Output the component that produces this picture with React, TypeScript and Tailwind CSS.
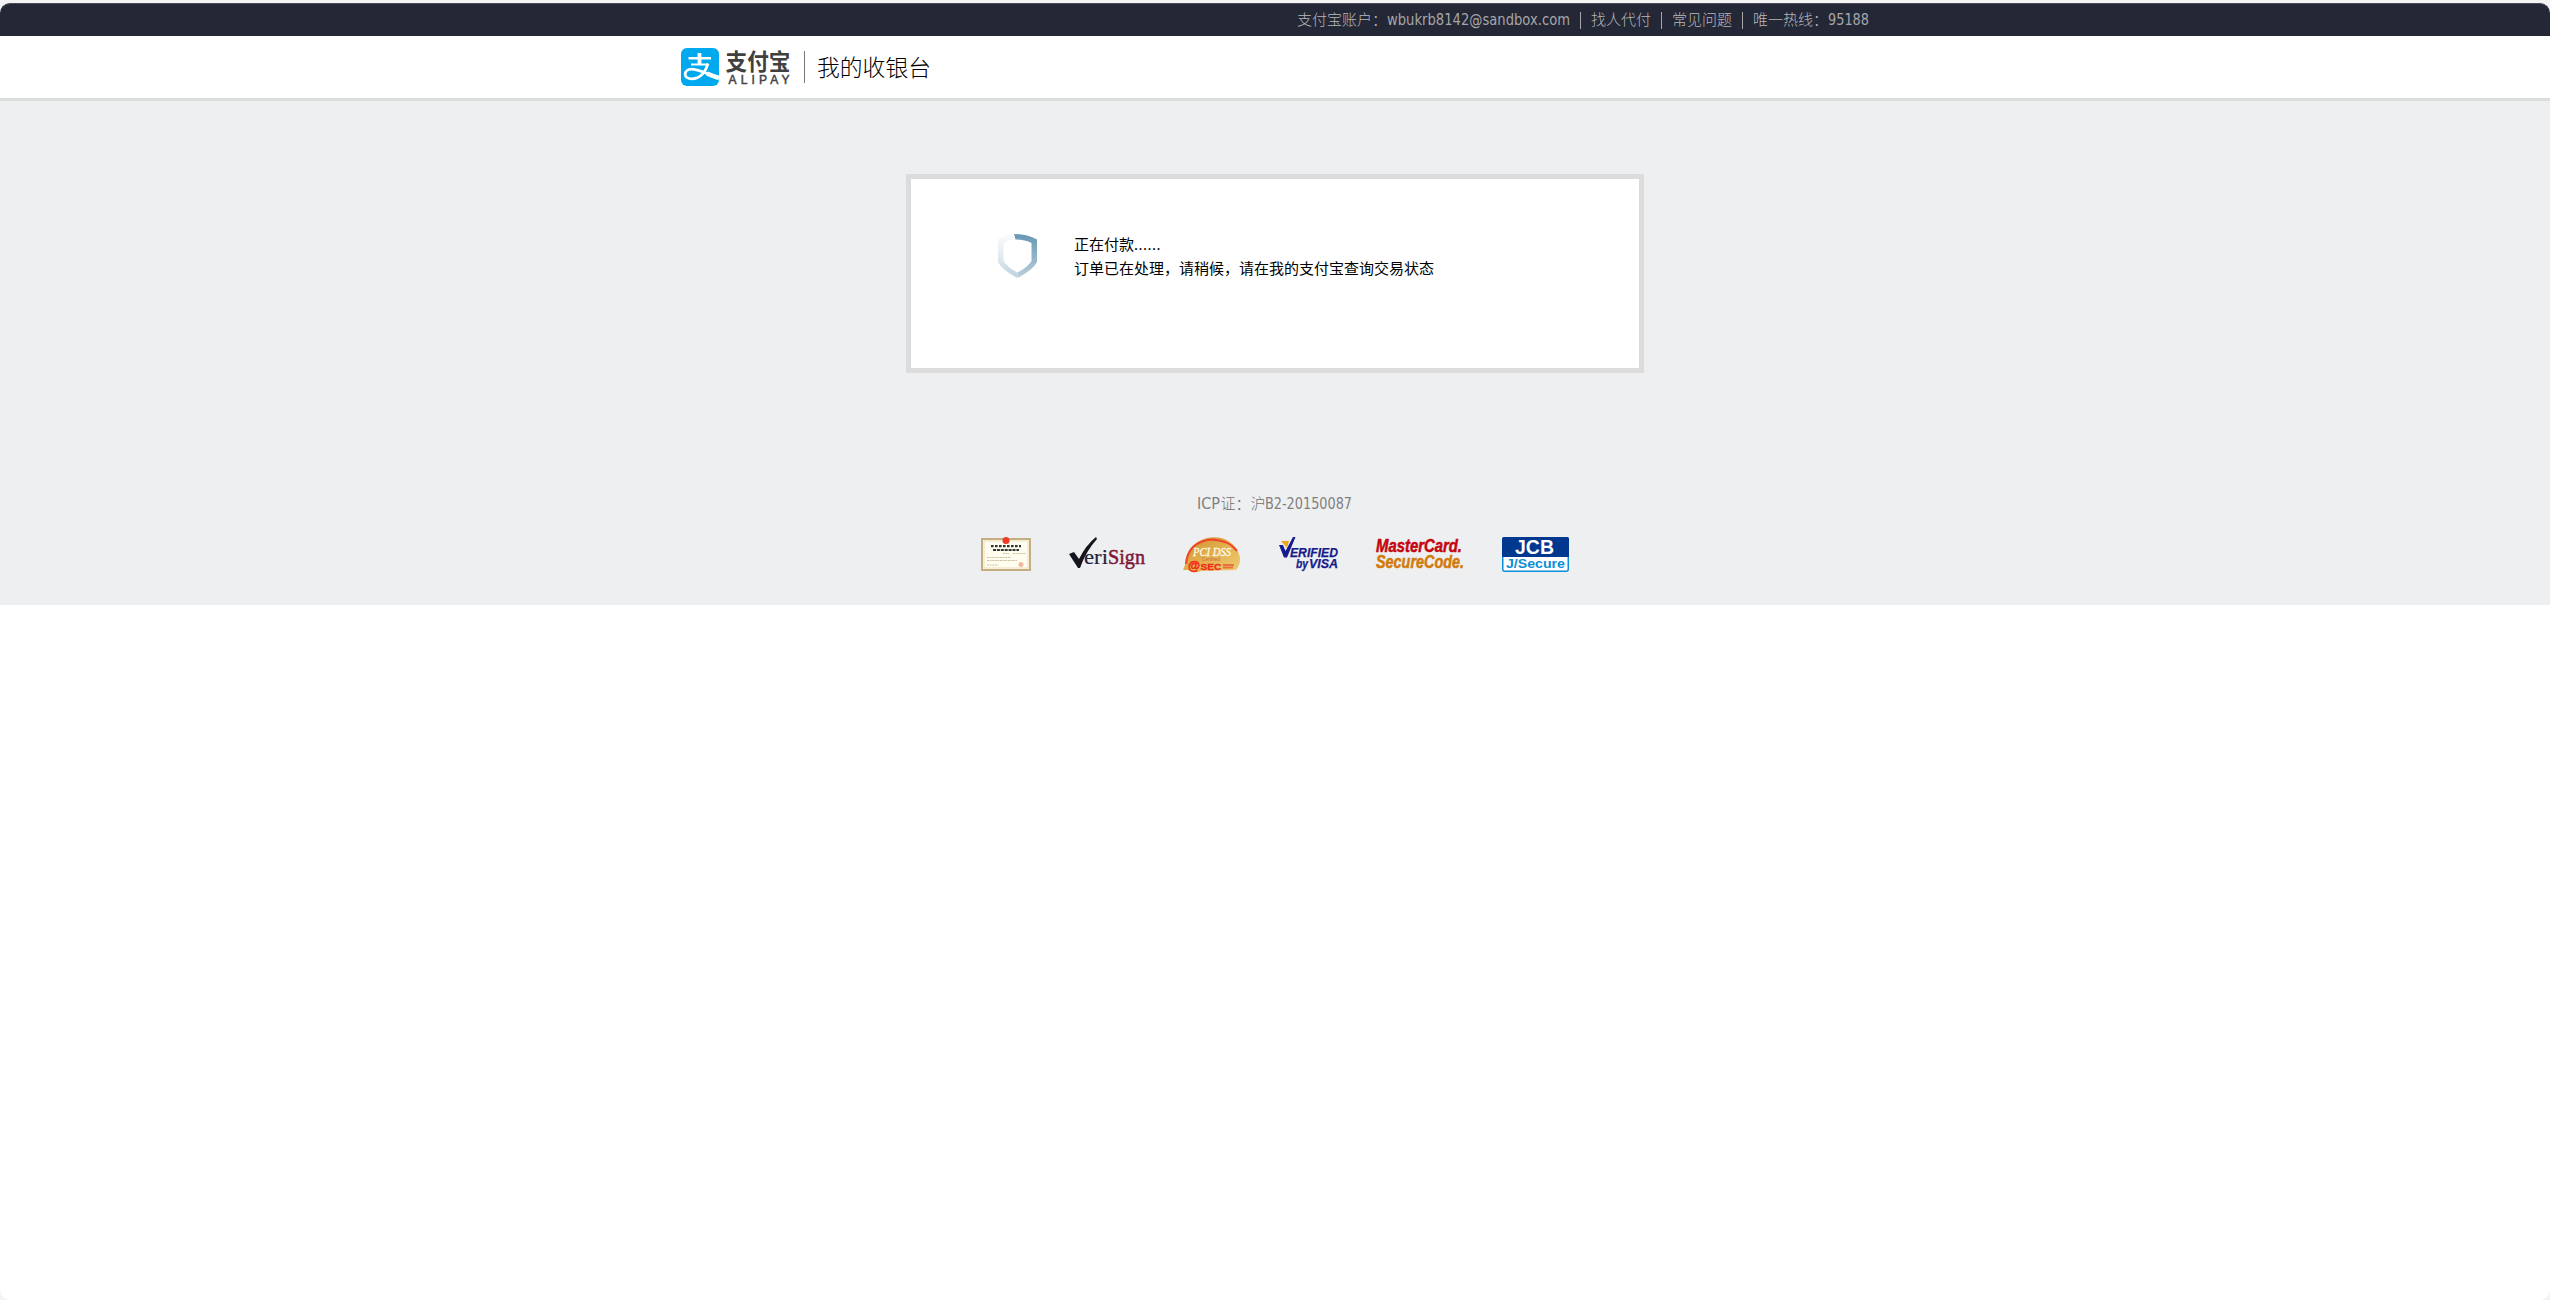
function TopBar() {
  return (
    <div className="mt-[3px] flex h-[33px] items-center rounded-t-[10px] border-t border-[#4a4c59] bg-[#242736] pl-[1297px] text-[15px] leading-none whitespace-nowrap text-[#b8b8ba] font-['Noto_Sans_CJK_SC',sans-serif] font-light">
      <span className="mb-[3px] w-[90px] shrink-0">支付宝账户：</span>
      <svg className="h-5 w-[184px] shrink-0 overflow-visible">
        <text x="0" y="14.500" fontSize="15" textLength="183" lengthAdjust="spacingAndGlyphs" fill="#a6a6a8" fontWeight="400" fontFamily="'DejaVu Sans',sans-serif">wbukrb8142@sandbox.com</text>
      </svg>
      <i className="ml-[9px] h-[17px] w-px shrink-0 bg-[#a6a6a8]" />
      <span className="mb-[3px] ml-[10px] w-[60px] shrink-0">找人代付</span>
      <i className="ml-[10px] h-[17px] w-px shrink-0 bg-[#a6a6a8]" />
      <span className="mb-[3px] ml-[10px] w-[60px] shrink-0">常见问题</span>
      <i className="ml-[10px] h-[17px] w-px shrink-0 bg-[#a6a6a8]" />
      <span className="mb-[3px] ml-[10px] w-[75px] shrink-0">唯一热线：</span>
      <svg className="h-5 w-[42px] shrink-0 overflow-visible">
        <text x="0" y="14.500" fontSize="15" textLength="41" lengthAdjust="spacingAndGlyphs" fill="#a6a6a8" fontWeight="400" fontFamily="'DejaVu Sans',sans-serif">95188</text>
      </svg>
    </div>
  );
}

function AlipayLogo() {
  return (
    <svg width="110" height="38" viewBox="0 0 110 38" className="shrink-0 overflow-visible">
      <rect width="38" height="38" rx="6" fill="#00a9ee" />
      <g fill="none" stroke="#fff">
        <path d="M18.500 5V17" strokeWidth="3.800" />
        <path d="M7.500 10.200H30" strokeWidth="2.600" />
        <path d="M10 16.500H27" strokeWidth="2.200" />
        <path d="M27 15.500C25 22.500 20 30.800 11 30.800C6.500 30.800 4.200 28.800 4.200 26.200C4.200 23 7 21.200 10.500 21.200C17 21.200 26 26 38 29.500" strokeWidth="2.800" />
        <path d="M26 25.500C30 27.300 34 28.800 38 30" strokeWidth="4.500" />
      </g>
      <text x="44.500" y="21.500" fontSize="23" fontWeight="700" textLength="65" lengthAdjust="spacingAndGlyphs" fill="#404040" fontFamily="'Noto Sans CJK SC',sans-serif">支付宝</text>
      <text x="47.500" y="36" fontSize="12" fontWeight="400" textLength="61" lengthAdjust="spacing" fill="#444" stroke="#444" strokeWidth=".5" fontFamily="'Liberation Sans',sans-serif">ALIPAY</text>
    </svg>
  );
}

function Header() {
  return (
    <header className="flex h-[62px] items-start bg-white pl-[681px] pt-3">
      <AlipayLogo />
      <i className="ml-[13px] mt-[3px] h-8 w-px bg-[#777]" />
      <h1 className="ml-[12px] mt-[7px] text-[22.8px] leading-6 font-light whitespace-nowrap text-black font-['Noto_Sans_CJK_SC',sans-serif]">我的收银台</h1>
    </header>
  );
}

function Shield() {
  return (
    <svg width="39" height="44" viewBox="0 0 39 44" className="shrink-0">
      <defs>
        <linearGradient id="right" x1="0" y1="0" x2="0" y2="1">
          <stop offset="0" stopColor="#6797b4" />
          <stop offset=".5" stopColor="#8fb2c8" />
          <stop offset="1" stopColor="#bdd0dc" />
        </linearGradient>
        <linearGradient id="left" x1="0" y1="0" x2="0" y2="1">
          <stop offset="0" stopColor="#fafcfd" />
          <stop offset=".5" stopColor="#e3ebf0" />
          <stop offset="1" stopColor="#bdd0dc" />
        </linearGradient>
      </defs>
      <path d="M16 0Q29 0 39 5.500V28Q35 36 19.500 44V38.500Q30 33 33.500 27V9Q27 5.500 17.500 5.500Z" fill="url(#right)" />
      <path d="M15 .5Q8 1 0 5V28Q4 36 19.500 44V38.500Q9 33 5.500 27V9Q10 6 16 5.500Z" fill="url(#left)" />
    </svg>
  );
}

function StatusCard() {
  return (
    <section className="mx-auto mt-[73px] flex h-[199px] w-[738px] border-[5px] border-[#dcdcdc] bg-white pl-[87px] pt-[55px]">
      <Shield />
      <div className="ml-[37px] -mt-[2px] text-[15px] leading-[23px] whitespace-nowrap text-black font-['Noto_Sans_CJK_SC',sans-serif] font-normal">
        <p>正在付款<span className="font-['Noto_Sans',sans-serif] tracking-[0.5px]">......</span></p>
        <p>订单已在处理，请稍候，请在我的支付宝查询交易状态</p>
      </div>
    </section>
  );
}

function Certificate() {
  return (
    <svg width="50" height="34" viewBox="0 0 50 34" className="overflow-visible">
      <rect x="1" y="2" width="48" height="31" fill="#fffdf0" stroke="#c4ad7e" strokeWidth="2" />
      <rect x="3" y="4" width="44" height="27" fill="none" stroke="#eadfbd" />
      <circle cx="25" cy="3.500" r="3.500" fill="#ee3c28" />
      <path d="M10 9.200H40" stroke="#333" strokeWidth="2.200" strokeDasharray="2.600 1.400" />
      <path d="M12 13H38" stroke="#333" strokeWidth="2.200" strokeDasharray="3 .9" />
      <path d="M22 16.500H28M32 16.500H45M6 20.500H30M6 23.500H36M6 28H17" stroke="#d0c39d" strokeDasharray="2 .6" />
      <circle cx="40" cy="27.500" r="2.500" fill="#f0b8a0" />
    </svg>
  );
}

function VeriSign() {
  return (
    <svg width="77" height="34" viewBox="0 0 77 34" className="overflow-visible">
      <path d="M0 17L5 15L10 22Q17 8 27 0L28 2Q17 14 11 31H9Z" fill="#15161d" />
      <text x="15" y="26.500" fontSize="22" textLength="24" lengthAdjust="spacingAndGlyphs" fill="#23223f" stroke="#23223f" strokeWidth=".2" fontFamily="'Liberation Serif',serif">eri</text>
      <text x="39" y="26.500" fontSize="22" textLength="37" lengthAdjust="spacingAndGlyphs" fill="#7d1638" stroke="#7d1638" strokeWidth=".5" fontFamily="'Liberation Serif',serif">Sign</text>
    </svg>
  );
}

function PciDss() {
  return (
    <svg width="58" height="36" viewBox="0 0 58 36">
      <defs>
        <linearGradient id="gold" x1="0" y1="0" x2="1" y2="1">
          <stop offset="0" stopColor="#cf8f2c" />
          <stop offset=".5" stopColor="#e2b04e" />
          <stop offset="1" stopColor="#f0cd75" />
        </linearGradient>
      </defs>
      <path d="M0 33L2 28Q3 7 24 1Q47-3 56 17Q59 26 53 33L18 34Q12 37 6 33Z" fill="url(#gold)" />
      <path d="M3 27Q5 5 28 2.500Q46 3 54 14" fill="none" stroke="#f0452a" strokeWidth="2" />
      <text x="10" y="18.500" fontSize="12" fontStyle="italic" fontWeight="400" textLength="38" lengthAdjust="spacingAndGlyphs" fill="#fff9e8" stroke="#fff9e8" strokeWidth=".3" fontFamily="'Liberation Serif',serif">PCI DSS</text>
      <text x="19" y="23.500" fontSize="4.500" textLength="18" fill="#ce6736" fontFamily="'Liberation Sans',sans-serif">Certified</text>
      <text x="5" y="32.500" fontSize="13" fontWeight="700" fill="#f02a18" stroke="#f02a18" strokeWidth=".5" textLength="12" lengthAdjust="spacingAndGlyphs" fontFamily="'Liberation Sans',sans-serif">@</text>
      <text x="17.500" y="32.500" fontSize="9" fontWeight="700" fill="#f02a18" stroke="#f02a18" strokeWidth=".3" textLength="21" lengthAdjust="spacingAndGlyphs" fontFamily="'Liberation Sans',sans-serif">SEC</text>
      <path d="M40 28H51M40 30.500H50" stroke="#e8703f" strokeWidth="1.800" />
    </svg>
  );
}

function VerifiedByVisa() {
  return (
    <svg width="60" height="34" viewBox="0 0 60 34" fontFamily="'Liberation Sans',sans-serif" fontStyle="italic" fontWeight="700" fill="#161b8c" stroke="#161b8c" strokeWidth=".25" className="overflow-visible">
      <path d="M2 4H10L8 11Z" fill="#eda51e" stroke="none" />
      <path d="M0 8H4L6.500 14L14 0H16.500L8 20.500H5Z" stroke="none" />
      <text x="11" y="19.500" fontSize="13.500" textLength="48" lengthAdjust="spacingAndGlyphs">ERIFIED</text>
      <text x="17" y="31" fontSize="12" textLength="12" lengthAdjust="spacingAndGlyphs">by</text>
      <text x="30" y="31" fontSize="13" textLength="29" lengthAdjust="spacingAndGlyphs">VISA</text>
    </svg>
  );
}

function SecureCode() {
  return (
    <svg width="89" height="34" viewBox="0 0 89 34" fontFamily="'Liberation Sans',sans-serif" fontStyle="italic" fontWeight="700" strokeWidth=".5" className="overflow-visible">
      <text x="0" y="14.500" fontSize="17.500" textLength="86" lengthAdjust="spacingAndGlyphs" fill="#c4060f" stroke="#c4060f">MasterCard.</text>
      <text x="0" y="31" fontSize="17.500" textLength="88" lengthAdjust="spacingAndGlyphs" fill="#d27a0a" stroke="#d27a0a">SecureCode.</text>
    </svg>
  );
}

function Jcb() {
  return (
    <svg width="67" height="35" viewBox="0 0 67 35" fontWeight="700">
      <rect x=".75" y=".75" width="65.500" height="33.500" rx="2" fill="#fff" stroke="#0b8fd8" strokeWidth="1.500" />
      <path d="M0 2Q0 0 2 0H65Q67 0 67 2V20H0Z" fill="#00388f" />
      <text x="13" y="17" fontSize="20" textLength="39" lengthAdjust="spacingAndGlyphs" fill="#fff" fontFamily="'Liberation Sans',sans-serif">JCB</text>
      <text x="4" y="31" fontSize="12.500" textLength="59" lengthAdjust="spacingAndGlyphs" fill="#0b8fd8" fontFamily="'Liberation Sans',sans-serif">J/Secure</text>
    </svg>
  );
}

function Footer() {
  return (
    <footer className="mt-[119px]">
      <div className="h-[22px] pl-[1197px]">
        <svg className="h-[22px] w-[157px] overflow-visible" fontSize="15" fill="#808080">
          <text x="0" y="16.500" textLength="23" lengthAdjust="spacingAndGlyphs" fontFamily="'DejaVu Sans',sans-serif">ICP</text>
          <text x="23.500" y="16.500" fontFamily="'Noto Sans CJK SC',sans-serif" fontWeight="300" fill="#707070">证：沪</text>
          <text x="68" y="16.500" textLength="87" lengthAdjust="spacingAndGlyphs" fontFamily="'DejaVu Sans',sans-serif">B2-20150087</text>
        </svg>
      </div>
      <div className="mt-[23px] flex items-start pl-[981px]">
        <Certificate />
        <div className="ml-[38px]"><VeriSign /></div>
        <div className="ml-[37px]"><PciDss /></div>
        <div className="ml-[38px]"><VerifiedByVisa /></div>
        <div className="ml-[37px]"><SecureCode /></div>
        <div className="ml-[37px]"><Jcb /></div>
      </div>
    </footer>
  );
}

export default function App() {
  return (
    <div className="flow-root h-[1300px] w-[2550px] overflow-hidden bg-[#f3f3f3]">
      <TopBar />
      <div className="h-[1264px] overflow-hidden rounded-b-[10px] bg-white">
        <Header />
        <main className="flow-root h-[507px] border-t-[3px] border-[#dbdcdc] bg-[#eeeff1]">
          <StatusCard />
          <Footer />
        </main>
      </div>
    </div>
  );
}
